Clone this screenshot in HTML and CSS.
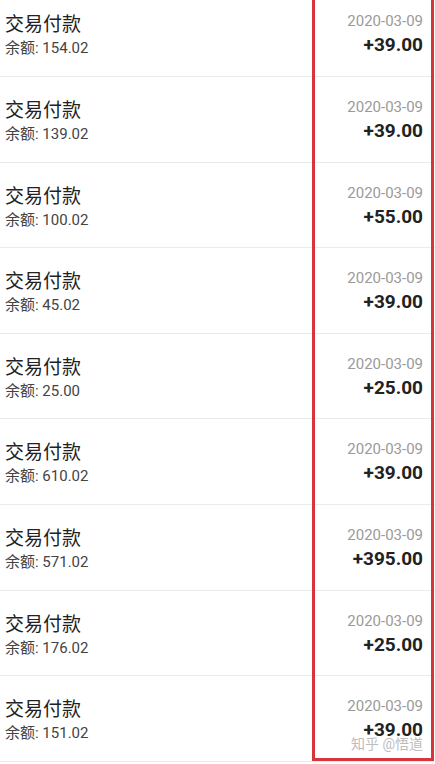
FILE: index.html
```html
<!DOCTYPE html>
<html lang="zh-CN">
<head>
  <meta charset="UTF-8" />
  <meta name="viewport" content="width=device-width, initial-scale=1.0"/>
  <title>交易记录</title>
  <link rel="stylesheet" href="styles.css">
</head>
<body>
  <div class="page">
    <ul class="records">
      <li class="record">
        <div class="info"><div class="title">交易付款</div><div class="balance">余额: 154.02</div></div>
        <div class="money"><div class="date">2020-03-09</div><div class="amount">+39.00</div></div>
      </li>
      <li class="record">
        <div class="info"><div class="title">交易付款</div><div class="balance">余额: 139.02</div></div>
        <div class="money"><div class="date">2020-03-09</div><div class="amount">+39.00</div></div>
      </li>
      <li class="record">
        <div class="info"><div class="title">交易付款</div><div class="balance">余额: 100.02</div></div>
        <div class="money"><div class="date">2020-03-09</div><div class="amount">+55.00</div></div>
      </li>
      <li class="record">
        <div class="info"><div class="title">交易付款</div><div class="balance">余额: 45.02</div></div>
        <div class="money"><div class="date">2020-03-09</div><div class="amount">+39.00</div></div>
      </li>
      <li class="record">
        <div class="info"><div class="title">交易付款</div><div class="balance">余额: 25.00</div></div>
        <div class="money"><div class="date">2020-03-09</div><div class="amount">+25.00</div></div>
      </li>
      <li class="record">
        <div class="info"><div class="title">交易付款</div><div class="balance">余额: 610.02</div></div>
        <div class="money"><div class="date">2020-03-09</div><div class="amount">+39.00</div></div>
      </li>
      <li class="record">
        <div class="info"><div class="title">交易付款</div><div class="balance">余额: 571.02</div></div>
        <div class="money"><div class="date">2020-03-09</div><div class="amount">+395.00</div></div>
      </li>
      <li class="record">
        <div class="info"><div class="title">交易付款</div><div class="balance">余额: 176.02</div></div>
        <div class="money"><div class="date">2020-03-09</div><div class="amount">+25.00</div></div>
      </li>
      <li class="record">
        <div class="info"><div class="title">交易付款</div><div class="balance">余额: 151.02</div></div>
        <div class="money"><div class="date">2020-03-09</div><div class="amount">+39.00</div></div>
      </li>
    </ul>

    <div class="highlight"></div>
    <div class="watermark">知乎 @悟道</div>
  </div>
</body>
</html>
```

FILE: styles.css
```css
body {
  margin: 0;
  background: #fff;
  font-family: Roboto, "Noto Sans CJK SC", sans-serif;
  color: #222;
}

.page {
  position: relative;
  height: 764px;
  overflow: hidden;
}

.records {
  list-style: none;
  margin: -8.6px 0 0;
  padding: 0;
}

.record {
  display: flex;
  justify-content: space-between;
  align-items: flex-start;
  box-sizing: border-box;
  height: 85.6px;
  padding: 0 12px 0 5px;
  border-bottom: 1px solid #ebebeb;
}

.info {
  padding-top: 21px;
}

.title {
  font-size: 19px;
  line-height: 25px;
  color: #222;
}

.balance {
  margin-top: 1px;
  font-size: 15px;
  line-height: 20px;
  color: #444;
}

.money {
  padding-top: 20px;
  text-align: right;
}

.date {
  font-size: 15px;
  line-height: 20px;
  color: #9a9a9a;
}

.amount {
  margin-top: 2px;
  font-size: 19px;
  line-height: 24px;
  font-weight: bold;
  color: #222;
}

/* red annotation frame drawn over the right column */
.highlight {
  position: absolute;
  left: 312px;
  top: -6px;
  width: 116px;
  height: 761px;
  border: 3px solid #d8343b;
}

.watermark {
  position: absolute;
  right: 12px;
  bottom: 11px;
  font-size: 14px;
  color: #bdbdbd;
  text-shadow: 0 0 2px #fff;
}
```
